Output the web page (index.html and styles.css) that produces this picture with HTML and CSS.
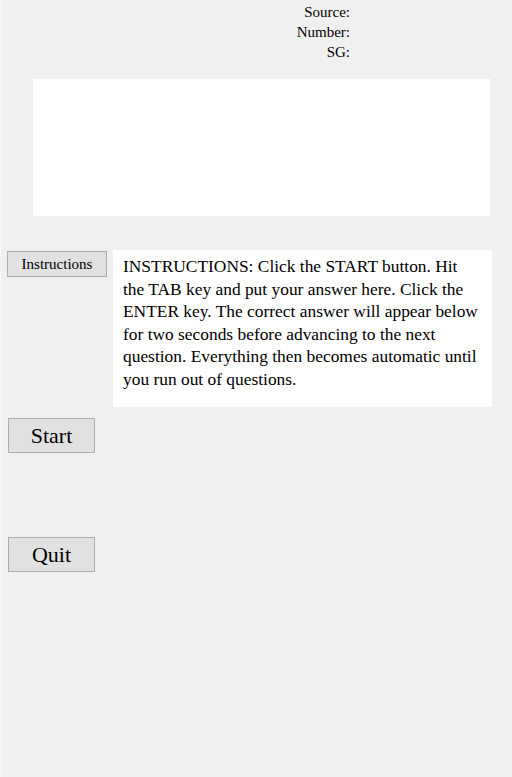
FILE: index.html
```html
<!DOCTYPE html>
<html lang="en">
<head>
    <meta charset="UTF-8">
    <meta name="viewport" content="width=device-width, initial-scale=1.0">
    <title>Quiz</title>
    <link rel="stylesheet" href="styles.css">
</head>
<body>
    <div class="meta">
        <div>Source:</div>
        <div>Number:</div>
        <div>SG:</div>
    </div>

    <div class="display"></div>

    <div class="instructions-row">
        <button class="btn btn-small">Instructions</button>
        <div class="instructions">
            INSTRUCTIONS: Click the START button. Hit the TAB key and put your answer here. Click the ENTER key. The correct answer will appear below for two seconds before advancing to the next question. Everything then becomes automatic until you run out of questions.
        </div>
    </div>

    <button class="btn btn-big btn-start">Start</button>
    <button class="btn btn-big btn-quit">Quit</button>
</body>
</html>
```

FILE: styles.css
```css
body {
    margin: 0;
    min-height: 777px;
    background-color: #f0f0f0;
    font-family: "Liberation Serif", serif;
    color: #000;
    border-left: 1px solid #f7f7f7;
    box-sizing: border-box;
}
.meta {
    width: 349px;
    padding-top: 2px;
    text-align: right;
    font-size: 15px;
    line-height: 20px;
}
.display {
    margin: 17px 0 0 32px;
    width: 457px;
    height: 137px;
    background: white;
}
.instructions-row {
    display: flex;
    align-items: flex-start;
    margin-top: 34px;
}
.btn {
    display: block;
    background-color: #e1e1e1;
    border: 1px solid #adadad;
    border-radius: 0;
    font-family: "Liberation Serif", serif;
    color: #000;
    padding: 0;
    cursor: pointer;
}
.btn-small {
    margin: 1px 0 0 6px;
    width: 100px;
    height: 26px;
    font-size: 15px;
}
.instructions {
    margin-left: 6px;
    width: 359px;
    height: 152px;
    padding: 5px 10px 0 10px;
    background: white;
    font-family: "Liberation Serif", serif;
    font-size: 17.4px;
    line-height: 22.5px;
}
.btn-big {
    margin-left: 7px;
    width: 87px;
    height: 35px;
    font-size: 22px;
}
.btn-start {
    margin-top: 11px;
}
.btn-quit {
    margin-top: 84px;
}
```
